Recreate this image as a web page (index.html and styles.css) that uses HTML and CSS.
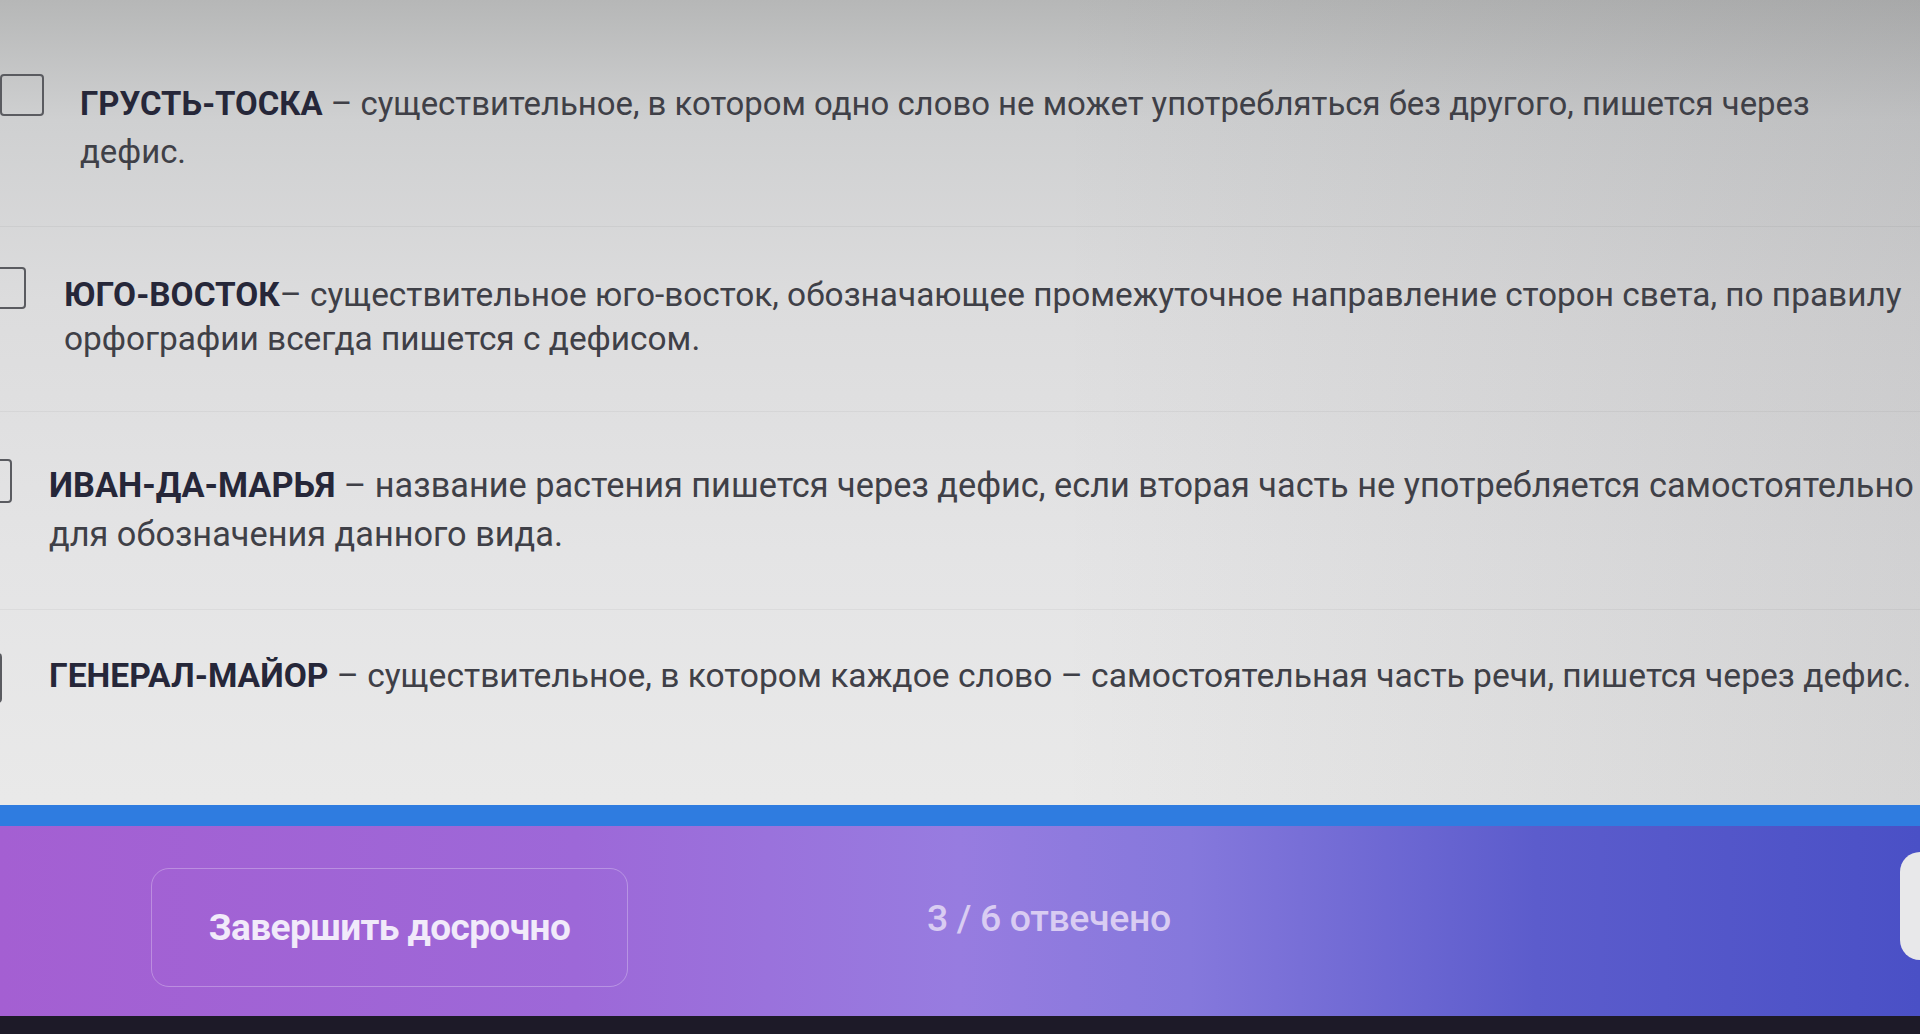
FILE: index.html
```html
<!DOCTYPE html>
<html lang="ru">
<head>
<meta charset="utf-8">
<title>Тест</title>
<link rel="stylesheet" href="styles.css">
</head>
<body>
<div class="page">
  <main class="answers">
    <div class="answer answer--1">
      <span class="check"></span>
      <p class="answer-text"><b>ГРУСТЬ-ТОСКА</b> – существительное, в котором одно слово не может употребляться без другого, пишется через дефис.</p>
    </div>
    <div class="answer answer--2">
      <span class="check"></span>
      <p class="answer-text"><b>ЮГО-ВОСТОК</b>– существительное юго-восток, обозначающее промежуточное направление сторон света, по правилу орфографии всегда пишется с дефисом.</p>
    </div>
    <div class="answer answer--3">
      <span class="check"></span>
      <p class="answer-text"><b>ИВАН-ДА-МАРЬЯ</b> – название растения пишется через дефис, если вторая часть не употребляется самостоятельно для обозначения данного вида.</p>
    </div>
    <div class="answer answer--4">
      <span class="check"></span>
      <p class="answer-text"><b>ГЕНЕРАЛ-МАЙОР</b> – существительное, в котором каждое слово – самостоятельная часть речи, пишется через дефис.</p>
    </div>
  </main>
  <footer class="footer">
    <div class="footer-line"></div>
    <div class="footer-bar">
      <button class="finish">Завершить досрочно</button>
      <span class="progress">3 / 6 отвечено</span>
      <span class="next"></span>
    </div>
    <div class="footer-edge"></div>
  </footer>
</div>
</body>
</html>
```
FILE: styles.css
```css
* { box-sizing: border-box; }
html, body { margin: 0; height: 100%; }
body {
  font-family: Roboto, "Noto Sans", "Liberation Sans", sans-serif;
  overflow: hidden;
  background: #e2e2e3;
}
.page {
  height: 1034px;
  display: flex;
  flex-direction: column;
  overflow: hidden;
  background:
    linear-gradient(to right, rgba(0,0,0,0) 55%, rgba(40,40,45,0.10) 100%),
    linear-gradient(to bottom, #b6b7b7 0px, #cfd0d1 120px, #dcdcdd 300px, #e4e4e5 550px, #e9e9e9 800px);
}
.answers {
  flex: 1;
  min-height: 0;
  padding-top: 34px;
}
.answer {
  display: flex;
  align-items: flex-start;
  gap: 36px;
  padding: 46px 0 50px;
  border-bottom: 1px solid rgba(0,0,0,0.045);
}
.answer--1 { margin-left: 0; }
.answer--2 { margin-left: -18px; gap: 38px; }
.answer--3 { margin-left: -32px; gap: 37px; padding-top: 49px; }
.answer--4 { margin-left: -42px; gap: 47px; padding-top: 43px; border-bottom: none; }
.check {
  flex: none;
  width: 44px;
  height: 42px;
  margin-top: -6px;
  border: 2.5px solid #5a5b60;
  border-radius: 4px;
}
.answer--3 .check { margin-top: -2px; height: 44px; }
.answer--4 .check { margin-top: 0; height: 50px; }
.answer-text {
  margin: 0;
  font-size: 34px;
  line-height: 46px;
  color: #3f4047;
  width: 1850px;
}
.answer--1 .answer-text { width: 1740px; font-size: 32.9px; line-height: 48px; }
.answer--2 .answer-text { font-size: 33.4px; line-height: 44px; }
.answer--3 .answer-text { width: 1868px; font-size: 34.3px; line-height: 49px; }
.answer--4 .answer-text { font-size: 33.6px; white-space: nowrap; }
.answer-text b {
  font-weight: 700;
  color: #262739;
}
.footer {
  flex: none;
  display: flex;
  flex-direction: column;
}
.footer-line {
  height: 21px;
  background: #2f7ce0;
}
.footer-bar {
  height: 190px;
  display: flex;
  align-items: center;
  padding-left: 151px;
  background: linear-gradient(to right, #a45fd2 0%, #9d68d8 30%, #977ce0 50%, #8578dc 62%, #5c5ccc 80%, #4a50c6 100%);
}
.finish {
  flex: none;
  width: 477px;
  height: 119px;
  margin-top: 12px;
  border: 1.5px solid rgba(255,255,255,0.28);
  border-radius: 18px;
  background: transparent;
  font-family: Roboto, "Noto Sans", "Liberation Sans", sans-serif;
  font-size: 37px;
  font-weight: 700;
  color: #f1eafa;
  letter-spacing: -0.6px;
}
.progress {
  margin-left: 299px;
  margin-top: -6px;
  font-size: 37.5px;
  font-weight: 500;
  color: #d9ccf2;
  letter-spacing: -0.4px;
}
.next {
  flex: none;
  margin-left: auto;
  width: 20px;
  height: 108px;
  margin-top: -30px;
  background: #e8e8ea;
  border-radius: 20px 0 0 20px;
}
.footer-edge {
  height: 18px;
  background: #1d1a28;
}
```
